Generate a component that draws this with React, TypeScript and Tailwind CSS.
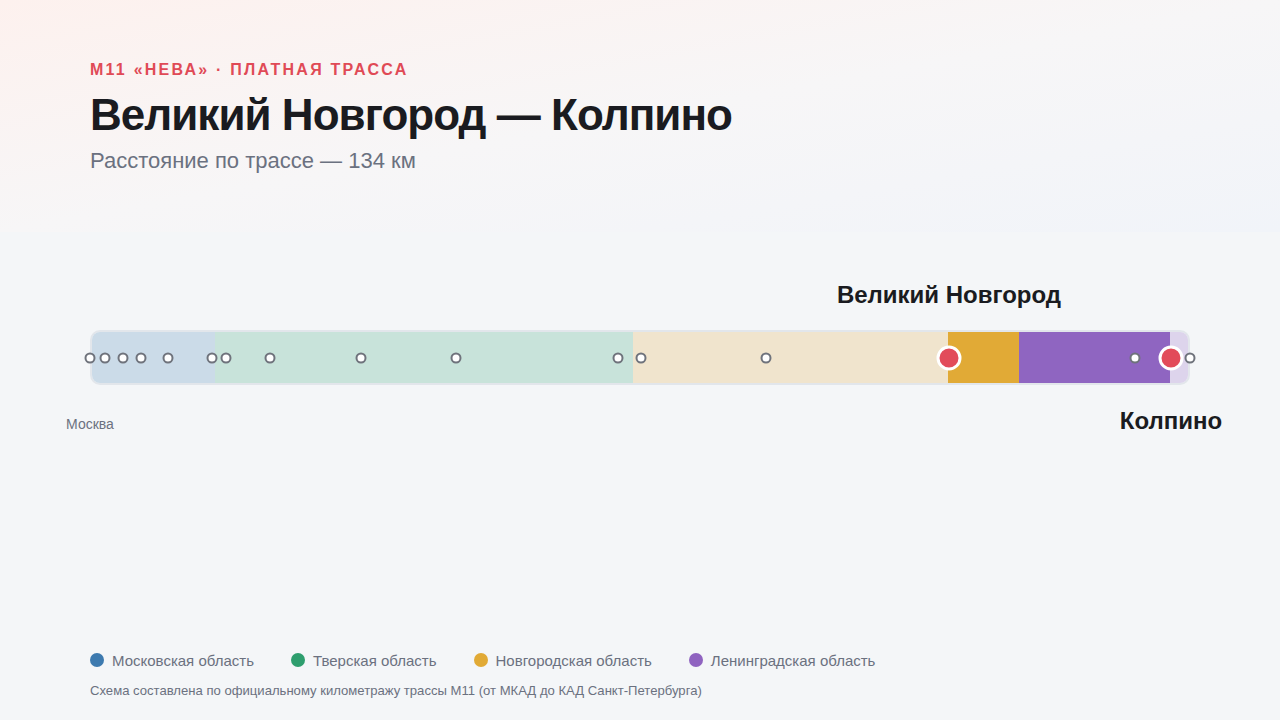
import React from 'react';

type Segment = { id: string; width: number; color: string };
type Stop = { pos: number; major?: boolean };

const segments: Segment[] = [
  { id: 'msk', width: 11.18, color: 'bg-[#cbdbe8]' },
  { id: 'tver', width: 38.18, color: 'bg-[#c8e3da]' },
  { id: 'nov-faded', width: 28.73, color: 'bg-[#f0e4cd]' },
  { id: 'nov', width: 6.45, color: 'bg-[#e1aa36]' },
  { id: 'len', width: 13.82, color: 'bg-[#8f65c1]' },
  { id: 'len-faded', width: 1.64, color: 'bg-[#ddd4ec]' },
];

// positions along the route, % of the bar
const stops: Stop[] = [
  { pos: 0 }, { pos: 1.36 }, { pos: 3 }, { pos: 4.64 }, { pos: 7.09 },
  { pos: 11.09 }, { pos: 12.36 }, { pos: 16.36 }, { pos: 24.64 }, { pos: 33.27 },
  { pos: 48 }, { pos: 50.09 }, { pos: 61.45 }, { pos: 78.09, major: true },
  { pos: 95 }, { pos: 98.27, major: true }, { pos: 100 },
];

const legend = [
  { label: 'Московская область', color: 'bg-[#3d7aaf]' },
  { label: 'Тверская область', color: 'bg-[#2e9e6e]' },
  { label: 'Новгородская область', color: 'bg-[#e1aa36]' },
  { label: 'Ленинградская область', color: 'bg-[#8f63c0]' },
];

const App: React.FC = () => {
  return (
    <div className="h-[720px] w-full bg-[#f4f6f8] flex flex-col font-['Liberation_Sans',Arial,sans-serif] overflow-hidden">
      <header className="h-[232px] px-[90px] pt-[62px] bg-gradient-to-br from-[#fdf1ee] via-[#f7f6f7] to-[#f1f4f9]">
        <p className="text-[16px] leading-none font-bold tracking-[0.14em] text-[#e04a56]">
          M11 «НЕВА» · ПЛАТНАЯ ТРАССА
        </p>
        <h1 className="mt-[15px] text-[44px] leading-none font-bold tracking-[-0.022em] text-[#1a1b20]">
          Великий Новгород — Колпино
        </h1>
        <p className="mt-[13px] text-[22px] leading-none text-[#6b7180]">
          Расстояние по трассе — 134 км
        </p>
      </header>

      <section className="px-[90px] pt-[98px]">
        <div className="relative h-[55px]">
          <div className="flex h-full rounded-[10px] overflow-hidden border-2 border-[#e2e6eb]">
            {segments.map(s => (
              <div key={s.id} className={`h-full ${s.color}`} style={{ width: `${s.width}%` }} />
            ))}
          </div>

          {stops.map((s, i) => (
            <div
              key={i}
              className={`absolute top-1/2 -translate-x-1/2 -translate-y-1/2 rounded-full ${
                s.major
                  ? 'w-[25px] h-[25px] bg-[#e24b5a] border-[3px] border-white'
                  : 'w-[11px] h-[11px] bg-white border-2 border-[#6f737c]'
              }`}
              style={{ left: `${s.pos}%` }}
            />
          ))}

          <span className="absolute -top-[47px] left-[78.09%] -translate-x-1/2 whitespace-nowrap text-[24px] leading-none font-bold text-[#1a1b20]">
            Великий Новгород
          </span>
          <span className="absolute top-[79px] left-[98.27%] -translate-x-1/2 whitespace-nowrap text-[24px] leading-none font-bold text-[#1a1b20]">
            Колпино
          </span>
          <span className="absolute top-[87px] left-0 -translate-x-1/2 whitespace-nowrap text-[14px] leading-none text-[#6b7180]">
            Москва
          </span>
        </div>
      </section>

      <footer className="mt-auto px-[90px] pb-[23px]">
        <div className="flex items-center gap-[37px]">
          {legend.map(l => (
            <div key={l.label} className="flex items-center gap-[8px]">
              <span className={`w-[14px] h-[14px] rounded-full ${l.color}`} />
              <span className="text-[15px] leading-none text-[#6b7180]">{l.label}</span>
            </div>
          ))}
        </div>
        <p className="mt-[16px] text-[13.1px] leading-none text-[#6b7180]">
          Схема составлена по официальному километражу трассы M11 (от МКАД до КАД Санкт-Петербурга)
        </p>
      </footer>
    </div>
  );
};

export default App;
